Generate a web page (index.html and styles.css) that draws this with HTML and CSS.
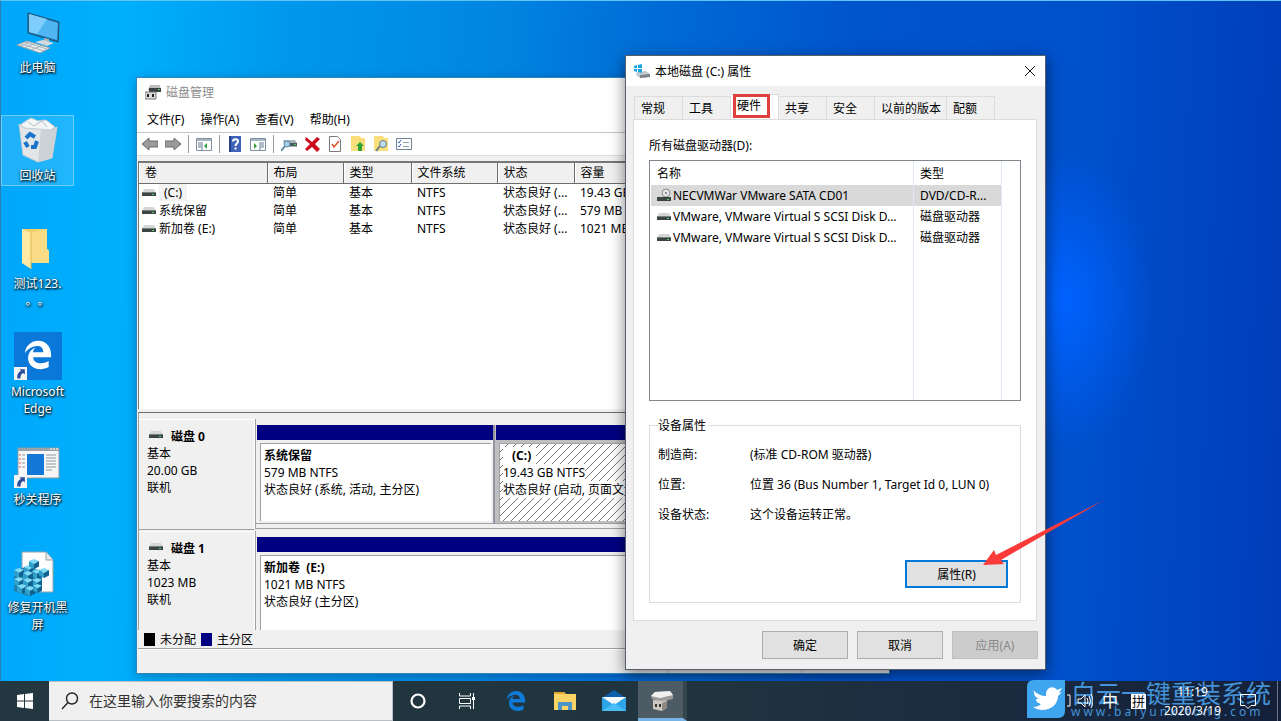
FILE: index.html
```html
<!DOCTYPE html>
<html lang="zh-CN">
<head>
    <meta charset="UTF-8">
    <meta name="viewport" content="width=device-width, initial-scale=1.0">
    <title>磁盘管理</title>
    <link rel="stylesheet" href="styles.css">
</head>
<body>
    <!-- Shared symbols -->
    <svg class="symbols" aria-hidden="true">
        <symbol id="drive" viewBox="0 0 14 14">
            <path d="M2 4h10l2 4H0z" fill="#d3d7d5"/>
            <path d="M0 7h14v4H0z" fill="#3c4444"/>
            <path d="M0 7h14v1H0z" fill="#78807e"/>
            <path d="M10 9h2v1h-2z" fill="#4fd06a"/>
        </symbol>
        <symbol id="shortcut" viewBox="0 0 12 12">
            <path d="M0 0h12v12H0z" fill="#f4f4f4"/>
            <path d="M5 2h5v5L8.500 5.500C6.500 6.500 6 8 6 10.500H3C2.500 7 4 5 6.500 3.500z" fill="#2c4f9c"/>
        </symbol>
        <symbol id="edge" viewBox="0 0 24 24">
            <path d="M2.740 10.810C3.830-1.360 22.500-1.360 21.200 13.560H8.610C8.610 17.850 14.420 19.210 19.540 16.310V20.530C13.250 23.880 5 21.430 5 14.090C5 8.580 9.970 6.810 9.970 6.810C9.970 6.810 8.580 8.580 8.540 10.050H15.700C15.700 2.930 5.900 5.570 2.740 10.810Z" fill="currentColor"/>
        </symbol>
        <symbol id="cube" viewBox="0 0 10 10">
            <path d="M5 0l5 2-5 3-5-3z" fill="#7fdcf4"/>
            <path d="M0 2l5 3v5L0 7.500z" fill="#2f9fcb"/>
            <path d="M10 2L5 5v5l5-2.500z" fill="#12628f"/>
        </symbol>
        <symbol id="diskmgmt" viewBox="0 0 24 24">
            <path d="M2 8l4-4 15-1 3 4v4l-13 3-8-3z" fill="#9b9b9b"/>
            <path d="M2 8l4-4 15-1 3 4-13 3z" fill="#f0f0f0"/>
            <path d="M4 12l9 1 5-1v8l-5 3-9-2z" fill="#cfc8c0"/>
            <path d="M13 15l5-2v7l-5 3z" fill="#8d8781"/>
            <path d="M6 16h2v3H6zM10 16h2v3h-2z" fill="#333"/>
        </symbol>
    </svg>

    <main class="desktop">
        <ul class="shortcuts">
            <li class="shortcut">
                <svg viewBox="0 0 48 48">
                    <path d="M14 5l31 9-1 20-30-9z" fill="#1d76b8" stroke="#234b66"/>
                    <path d="M15 6l29 9-1 17-28-8z" fill="#4fb5f3"/>
                    <path d="M15 6l18 5-10 15-8-2z" fill="#7fcdfa"/>
                    <path d="M30 30l5 1v4h-5z" fill="#a9b6bf"/>
                    <path d="M21 34l8-2 11 3-7 3z" fill="#d3dade"/>
                    <path d="M3 37l10-4 23 7-10 5z" fill="#e9edef" stroke="#9aa5ac"/>
                    <path d="M8 36l22 7M11 34l22 7M10 40l10-4M17 42l10-4M6 38l9-3" stroke="#a9b3b9" fill="none"/>
                </svg>
                <span class="shortcut-name">此电脑</span>
            </li>
            <li class="shortcut selected">
                <svg viewBox="0 0 48 48">
                    <path d="M6 9l6-4 5-3 7 3 8-1 9 7-7 5-20-2z" fill="#f4f6f7" stroke="#c6cdd1"/>
                    <path d="M14 6l6 4 8-5 5 6" stroke="#b4bdc4" fill="none"/>
                    <path d="M5 8l5 4 28 2 5-3-5 31-14 4-15-7z" fill="#e3e6e9" stroke="#c4cbd0"/>
                    <path d="M27 13l11 1 5-3-5 31-14 4z" fill="#ccd2d6"/>
                    <g fill="none" stroke="#1c74c8" stroke-width="4">
                        <path d="M12 22l4-4 5 3"/>
                        <path d="M23 25l-2 6h-4"/>
                        <path d="M14 31l-3-5"/>
                    </g>
                </svg>
                <span class="shortcut-name">回收站</span>
            </li>
            <li class="shortcut">
                <svg viewBox="0 0 48 48">
                    <path d="M8 5h25v20l2 2v12H16z" fill="#f3cf6b"/>
                    <path d="M17 9l16-4v20l2 2v12H17z" fill="#fbdc86"/>
                    <path d="M8 5l9 4v36l-9-6z" fill="#ffeaa5"/>
                    <path d="M17 9v36" stroke="#e2b750"/>
                </svg>
                <span class="shortcut-name">测试123.<br>。。</span>
            </li>
            <li class="shortcut">
                <svg viewBox="0 0 48 48" color="#fff">
                    <path d="M0 0h48v48H0z" fill="#0a78d8"/>
                    <use href="#edge" x="7" y="6" width="34" height="34"/>
                    <use href="#shortcut" x="0" y="35" width="13" height="13"/>
                </svg>
                <span class="shortcut-name">Microsoft Edge</span>
            </li>
            <li class="shortcut">
                <svg viewBox="0 0 48 48">
                    <path d="M4 8h41v30H4z" fill="#f6f6f6" stroke="#8b9aa5"/>
                    <path d="M4 8h41v3H4z" fill="#9ca3a8"/>
                    <path d="M36 9h2M39 9h2M42 9h2" stroke="#fff"/>
                    <path d="M13 14h17v21H13z" fill="#1277d7"/>
                    <path d="M5 15h2M5 19h2M5 23h2M5 27h2" stroke="#e05c4c"/>
                    <path d="M8 15h3M8 19h3M8 23h3M8 27h3M32 15h10M32 18h10M32 21h10M32 24h10M32 27h10M32 30h6" stroke="#8f9699"/>
                    <use href="#shortcut" x="0" y="35" width="13" height="13"/>
                </svg>
                <span class="shortcut-name">秒关程序</span>
            </li>
            <li class="shortcut">
                <svg viewBox="0 0 48 48">
                    <path d="M8 4h24l7 8v32H8z" fill="#fdfdfd" stroke="#9aa2a6"/>
                    <path d="M32 4v8h7" fill="#e4e8ea" stroke="#9aa2a6"/>
                    <path d="M0 23l14-5 14 5v20l-14 5-14-5z" fill="#1f7fae"/>
                    <use href="#cube" x="10" y="17" width="10" height="10"/>
                    <use href="#cube" x="0" y="20" width="10" height="10"/>
                    <use href="#cube" x="18" y="21" width="10" height="10"/>
                    <use href="#cube" x="9" y="23" width="10" height="10"/>
                    <use href="#cube" x="0" y="29" width="10" height="10"/>
                    <use href="#cube" x="18" y="30" width="10" height="10"/>
                    <use href="#cube" x="9" y="30" width="10" height="10"/>
                    <use href="#cube" x="3" y="36" width="10" height="10"/>
                    <use href="#cube" x="11" y="38" width="10" height="10"/>
                    <use href="#cube" x="19" y="36" width="9" height="9"/>
                    <use href="#cube" x="15" y="11" width="10" height="10"/>
                    <use href="#cube" x="25" y="20" width="10" height="10"/>
                </svg>
                <span class="shortcut-name">修复开机黑屏</span>
            </li>
        </ul>

        <!-- Disk management window -->
        <section class="window manager">
            <header class="manager-title">
                <svg viewBox="0 0 16 16">
                    <path d="M5 1h10l1 5H3z" fill="#b9bdbb"/>
                    <path d="M4 4h12v4H4z" fill="#39403f"/>
                    <path d="M13 5h2v1h-2z" fill="#4fd06a"/>
                    <path d="M0 8h11v7H0z" fill="#dadada" stroke="#777"/>
                    <path d="M2 10h2v3H2zM7 10h2v3H7z" fill="#222"/>
                </svg>
                <h1>磁盘管理</h1>
            </header>
            <nav class="menu">
                <button type="button">文件(F)</button>
                <button type="button">操作(A)</button>
                <button type="button">查看(V)</button>
                <button type="button">帮助(H)</button>
            </nav>
            <div class="toolbar">
                <button type="button" aria-label="后退"><svg viewBox="0 0 16 16"><path d="M0 8l7-6v3h9v6H7v3z" fill="#9b9b9b" stroke="#6b6b6b"/></svg></button>
                <button type="button" aria-label="前进"><svg viewBox="0 0 16 16"><path d="M16 8L9 2v3H0v6h9v3z" fill="#9b9b9b" stroke="#6b6b6b"/></svg></button>
                <span class="separator"></span>
                <button type="button" aria-label="控制台树"><svg viewBox="0 0 16 16"><path d="M.5 2.500h15v12H.5z" fill="#fff" stroke="#7f8fa0"/><path d="M1 3h14v2H1z" fill="#a8b6c4"/><path d="M6 6v8M2 7h3M2 9h3M2 11h3" stroke="#5f7894"/><path d="M11 7v6L8 10z" fill="#35a13a"/></svg></button>
                <span class="separator"></span>
                <button type="button" aria-label="帮助"><svg viewBox="0 0 16 16"><path d="M2 0h12v16H2z" fill="#3e62b8"/><path d="M2 0h2v16H2z" fill="#24408c"/><path d="M6 5.500c0-3 5-3 5 0 0 2-2.500 2-2.500 4.500" fill="none" stroke="#fff" stroke-width="2"/><path d="M7.500 11.500h2v2h-2z" fill="#fff"/></svg></button>
                <button type="button" aria-label="操作窗格"><svg viewBox="0 0 16 16"><path d="M.5 2.500h15v12H.5z" fill="#fff" stroke="#7f8fa0"/><path d="M1 3h14v2H1z" fill="#a8b6c4"/><path d="M10 6v8M11 7h3M11 9h3M11 11h3" stroke="#5f7894"/><path d="M4 7v6l3-3z" fill="#35a13a"/></svg></button>
                <span class="separator"></span>
                <button type="button" aria-label="重新扫描"><svg viewBox="0 0 16 16"><path d="M2 4h12l2 3v4H4z" fill="#a8b3b8"/><path d="M5 7h11v3H5z" fill="#4d5a60"/><path d="M13 8h2v1h-2z" fill="#4fd06a"/><circle cx="6" cy="8" r="3" fill="#a9d0ea" stroke="#5c86a4"/><path d="M4 10l-4 5" stroke="#5c86a4" stroke-width="2"/></svg></button>
                <button type="button" aria-label="删除"><svg viewBox="0 0 16 16"><path d="M2 1l6 5 5-5 3 2-5 5 5 5-3 3-5-5-5 4-2-2 5-5-5-4z" fill="#cc0c1c"/></svg></button>
                <button type="button" aria-label="属性"><svg viewBox="0 0 16 16"><path d="M2.500.5h8l3 3v12h-11z" fill="#fff" stroke="#7a7a7a"/><path d="M5 8l2 3 5-6" fill="none" stroke="#e0542c" stroke-width="1.500"/></svg></button>
                <button type="button" aria-label="上移"><svg viewBox="0 0 16 16"><path d="M1 0h9l1 2h4v13H1z" fill="#f9df7c"/><path d="M10 6l4 4h-2v5H8v-5H6z" fill="#2fa336"/></svg></button>
                <button type="button" aria-label="搜索"><svg viewBox="0 0 16 16"><path d="M1 0h9l1 2h4v13H1z" fill="#f9df7c"/><path d="M7 10l-4 5" stroke="#667c88" stroke-width="2"/><circle cx="10" cy="8" r="3.500" fill="#bcdcf0" stroke="#667c88"/></svg></button>
                <button type="button" aria-label="列表"><svg viewBox="0 0 16 16"><path d="M.5 2.500h15v11H.5z" fill="#fff" stroke="#6d8296"/><path d="M2 6l1 1 2-3M2 10l1 1 2-3" fill="none" stroke="#2c62b8"/><path d="M7 6.500h6M7 10.500h6" stroke="#8fa0b0"/></svg></button>
            </div>

            <div class="volumes">
                <table class="volume-table">
                    <colgroup>
                        <col class="col-volume"><col class="col-layout"><col class="col-kind"><col class="col-fs"><col class="col-status"><col>
                    </colgroup>
                    <thead>
                        <tr><th>卷</th><th>布局</th><th>类型</th><th>文件系统</th><th>状态</th><th>容量</th></tr>
                    </thead>
                    <tbody>
                        <tr><td><svg><use href="#drive"/></svg><span class="marked">(C:)</span></td><td>简单</td><td>基本</td><td>NTFS</td><td>状态良好 (...</td><td>19.43 GB</td></tr>
                        <tr><td><svg><use href="#drive"/></svg>系统保留</td><td>简单</td><td>基本</td><td>NTFS</td><td>状态良好 (...</td><td>579 MB</td></tr>
                        <tr><td><svg><use href="#drive"/></svg>新加卷 (E:)</td><td>简单</td><td>基本</td><td>NTFS</td><td>状态良好 (...</td><td>1021 MB</td></tr>
                    </tbody>
                </table>
            </div>

            <div class="disks">
                <article class="disk">
                    <div class="disk-info">
                        <h2><svg><use href="#drive"/></svg>磁盘 0</h2>
                        <p>基本</p>
                        <p>20.00 GB</p>
                        <p>联机</p>
                    </div>
                    <div class="partitions">
                        <div class="partition reserved">
                            <div class="bar"></div>
                            <div class="partition-box">
                                <h3>系统保留</h3>
                                <p>579 MB NTFS</p>
                                <p>状态良好 (系统, 活动, 主分区)</p>
                            </div>
                        </div>
                        <div class="partition active">
                            <div class="bar"></div>
                            <div class="partition-box">
                                <h3 class="indent">(C:)</h3>
                                <p>19.43 GB NTFS</p>
                                <p>状态良好 (启动, 页面文</p>
                            </div>
                        </div>
                    </div>
                </article>
                <article class="disk">
                    <div class="disk-info">
                        <h2><svg><use href="#drive"/></svg>磁盘 1</h2>
                        <p>基本</p>
                        <p>1023 MB</p>
                        <p>联机</p>
                    </div>
                    <div class="partitions">
                        <div class="partition">
                            <div class="bar"></div>
                            <div class="partition-box">
                                <h3>新加卷 &nbsp;(E:)</h3>
                                <p>1021 MB NTFS</p>
                                <p>状态良好 (主分区)</p>
                            </div>
                        </div>
                    </div>
                </article>
            </div>
            <div class="key">
                <span class="swatch free"></span>未分配
                <span class="swatch primary"></span>主分区
            </div>
            <footer class="status"><span></span><span></span></footer>
        </section>

        <!-- Drive properties dialog -->
        <section class="window dialog">
            <header class="dialog-title">
                <svg class="dialog-icon" viewBox="0 0 16 16">
                    <path d="M3 9l9-1 4 3v3l-10 1-4-3z" fill="#c5cacd"/>
                    <path d="M6 12l10-1v3L6 15z" fill="#7d8487"/>
                    <path d="M0 3l3-1v3H0zM4 2l4-1v4H4zM0 6h3v3L0 8zM4 6h4v4L4 9z" fill="#16a3e8"/>
                </svg>
                <h2>本地磁盘 (C:) 属性</h2>
                <button type="button" class="close" aria-label="关闭">
                    <svg viewBox="0 0 12 12"><path d="M1 1l10 10M11 1L1 11" stroke="#111"/></svg>
                </button>
            </header>
            <div class="tabs" role="tablist">
                <button type="button" role="tab">常规</button>
                <button type="button" role="tab">工具</button>
                <button type="button" role="tab" aria-selected="true" class="current">硬件<span class="highlight"></span></button>
                <button type="button" role="tab">共享</button>
                <button type="button" role="tab">安全</button>
                <button type="button" role="tab">以前的版本</button>
                <button type="button" role="tab">配额</button>
            </div>
            <div class="panel">
                <p class="list-label" id="drivesLabel">所有磁盘驱动器(D):</p>
                <div class="drive-list">
                    <table class="drive-table" aria-labelledby="drivesLabel">
                        <colgroup><col><col class="col-type"></colgroup>
                        <thead>
                            <tr><th>名称</th><th>类型</th></tr>
                        </thead>
                        <tbody>
                            <tr class="picked">
                                <td><svg viewBox="0 0 14 14"><circle cx="9" cy="5" r="4" fill="#e3e3e3" stroke="#8c8c8c"/><circle cx="9" cy="5" r="1" fill="#777"/><path d="M0 9h14v4H0z" fill="#3c4444"/><path d="M10 11h2v1h-2z" fill="#4fd06a"/></svg>NECVMWar VMware SATA CD01</td>
                                <td>DVD/CD-R...</td>
                            </tr>
                            <tr>
                                <td><svg><use href="#drive"/></svg>VMware, VMware Virtual S SCSI Disk D...</td>
                                <td>磁盘驱动器</td>
                            </tr>
                            <tr>
                                <td><svg><use href="#drive"/></svg>VMware, VMware Virtual S SCSI Disk D...</td>
                                <td>磁盘驱动器</td>
                            </tr>
                            <tr class="filler"><td></td><td></td></tr>
                        </tbody>
                    </table>
                </div>
                <fieldset class="device">
                    <legend>设备属性</legend>
                    <dl>
                        <dt>制造商:</dt><dd>(标准 CD-ROM 驱动器)</dd>
                        <dt>位置:</dt><dd>位置 36 (Bus Number 1, Target Id 0, LUN 0)</dd>
                        <dt>设备状态:</dt><dd>这个设备运转正常。</dd>
                    </dl>
                    <button type="button" class="btn focused">属性(R)</button>
                </fieldset>
            </div>
            <footer class="actions">
                <button type="button" class="btn">确定</button>
                <button type="button" class="btn">取消</button>
                <button type="button" class="btn" disabled>应用(A)</button>
            </footer>
            <svg class="pointer" viewBox="0 0 122 66" aria-hidden="true">
                <path d="M0 65l11-15 2 5L121 0 18 60l3 4z" fill="#fb3a3a"/>
            </svg>
        </section>
    </main>

    <footer class="taskbar">
        <button type="button" class="start" aria-label="开始">
            <svg viewBox="0 0 16 16"><path d="M0 2l7-1v6.500H0zM8 1l8-1v7.500H8zM0 8.500h7V15l-7-1zM8 8.500h8V16l-8-1z" fill="#fff"/></svg>
        </button>
        <label class="search">
            <svg viewBox="0 0 18 18"><circle cx="11" cy="6.500" r="5.500" fill="none" stroke="#222" stroke-width="1.400"/><path d="M7 10.500L1 17" stroke="#222" stroke-width="1.400"/></svg>
            <input type="search" placeholder="在这里输入你要搜索的内容" aria-label="搜索">
        </label>
        <nav class="apps">
            <button type="button" aria-label="Cortana"><svg viewBox="0 0 24 24"><circle cx="12" cy="12" r="6.500" fill="none" stroke="#fff" stroke-width="2.200"/></svg></button>
            <button type="button" aria-label="任务视图"><svg viewBox="0 0 24 24"><path d="M4.500 4v3h11V4M4.500 20v-3h11v3M4.500 9.500h11v5h-11zM18.500 4v16" fill="none" stroke="#fff"/><path d="M17 8h3v3h-3z" fill="#fff"/></svg></button>
            <button type="button" class="blue" aria-label="Edge"><svg><use href="#edge"/></svg></button>
            <button type="button" aria-label="文件资源管理器"><svg viewBox="0 0 24 24"><path d="M1 3h10l2 2h10v16H1z" fill="#fbd465"/><path d="M1 3h10l1 2H1z" fill="#e0a72e"/><path d="M5 21v-8h14v8h-4v-4H9v4z" fill="#4d93c8"/></svg></button>
            <button type="button" aria-label="邮件"><svg viewBox="0 0 24 24"><path d="M0 9l12-8 12 8v3H0z" fill="#0d5fae"/><path d="M0 8h24v14H0z" fill="#2ba5e8"/><path d="M0 8h24L12 16z" fill="#f4f8fb"/><path d="M0 22L12 14l12 8z" fill="#49bdf5"/></svg></button>
            <button type="button" class="running" aria-label="磁盘管理"><svg><use href="#diskmgmt"/></svg></button>
        </nav>
        <div class="tray">
            <svg viewBox="0 0 26 18"><path d="M0 3h3v11H0" fill="none" stroke="#fff"/><path d="M11 7h3l4-4v12l-4-4h-3zM20 6q2 3 0 6M22 4q3 5 0 10M24 2q4 7 0 14" fill="none" stroke="#fff"/></svg>
            <span class="ime">中</span>
            <span class="ime mode">拼</span>
            <time class="clock">11:19<br>2020/3/19</time>
            <svg class="notices" viewBox="0 0 18 18"><path d="M1.500 2.500h15v11H12l-3 3-3-3H1.500z" fill="none" stroke="#fff"/></svg>
        </div>
        <div class="watermark">
            <svg viewBox="0 0 38 38">
                <path d="M7 0h31v31q0 7-7 7H0V7q0-7 7-7z" fill="#3fa5ee"/>
                <path d="M6 10c4 4 8 6 13 6-1-9 8-11 11-6l5-2-3 5 3-1-4 4c0 12-15 18-25 11 4 0 6-1 8-3-4-1-5-3-5-5h3c-4-2-5-4-5-7z" fill="#fff"/>
            </svg>
            <div>
                <strong>白云一键重装系统</strong>
                <span>www.baiyunxitong.com</span>
            </div>
        </div>
    </footer>
</body>
</html>
```

FILE: styles.css
```css
:root {
    --face: #f0f0f0;
    --line: #a0a0a0;
    --soft-line: #dcdcdc;
    --navy: #000080;
    --accent: #0078d7;
}

* {
    box-sizing: border-box;
}

body {
    margin: 0;
    height: 100vh;
    display: flex;
    flex-direction: column;
    overflow: hidden;
    font-family: "Noto Sans", "Noto Sans CJK SC", sans-serif;
    font-size: 12px;
    line-height: 17px;
    color: #000;
}

h1, h2, h3, p, ul, dl, dd {
    margin: 0;
    padding: 0;
    font-size: 12px;
    font-weight: normal;
}

button, input {
    font: inherit;
    color: inherit;
    margin: 0;
    padding: 0;
    border: 0;
    background: none;
}

svg {
    display: block;
    flex: none;
}

.symbols {
    position: absolute;
    width: 0;
    height: 0;
}

/* Desktop */
.desktop {
    position: relative;
    flex: 1;
    min-height: 0;
    border-left: 1px solid #2c7fb4;
    border-top: 1px solid #5fc4f4;
    background:
        radial-gradient(ellipse 90px 150px at 1062px 300px, #0062ff 0%, rgba(0, 98, 255, 0) 100%),
        linear-gradient(92deg, #00a6fa 0%, #00b0fe 9%, #0098ec 22%, #0086e2 38%, #006cd6 50%, #0054cc 66%, #0050cc 84%, #003cb8 100%);
}

.shortcuts {
    width: 73px;
    padding-top: 6px;
    display: flex;
    flex-direction: column;
    gap: 37px;
    list-style: none;
}

.shortcut {
    height: 71px;
    border: 1px solid transparent;
    display: flex;
    flex-direction: column;
    align-items: center;
    gap: 3px;
}

.shortcut.selected {
    border-color: rgba(255, 255, 255, 0.35);
    background: rgba(255, 255, 255, 0.12);
}

.shortcut svg {
    width: 48px;
    height: 48px;
}

.shortcut-name {
    width: 64px;
    text-align: center;
    text-spacing-trim: space-all;
    color: #fff;
    text-shadow: 1px 1px 2px #000, 0 1px 3px rgba(0, 0, 0, 0.8);
}

/* Windows */
.window {
    position: absolute;
    display: flex;
    flex-direction: column;
    background: var(--face);
}

.manager {
    left: 136px;
    top: 77px;
    bottom: 8px;
    width: 752px;
    box-shadow: 0 0 0 1px #2c86bc, 0 2px 10px rgba(0, 0, 0, 0.3);
}

.manager-title {
    height: 28px;
    padding-left: 8px;
    display: flex;
    align-items: center;
    gap: 5px;
    background: #fff;
    color: #8c8c8c;
}

.manager-title svg {
    width: 16px;
    height: 16px;
}

.menu {
    height: 27px;
    padding-left: 10px;
    display: flex;
    gap: 16px;
    background: #fff;
    border-bottom: 1px solid #c4c4c8;
}

.toolbar {
    height: 23px;
    padding-left: 5px;
    display: flex;
    align-items: center;
    gap: 7px;
    background: #fff;
    border-bottom: 1px solid var(--soft-line);
}

.toolbar svg {
    width: 16px;
    height: 16px;
}

.separator {
    width: 1px;
    height: 18px;
    background: #9a9a9a;
}

.volumes {
    height: 248px;
    margin: 5px 2px 0 1px;
    background: #fff;
    border-top: 2px solid #777;
    border-left: 1px solid #777;
}

.volume-table {
    width: 100%;
    border-collapse: collapse;
    table-layout: fixed;
    white-space: nowrap;
}

.volume-table th,
.volume-table td {
    height: 18px;
    padding: 0 0 0 6px;
    text-align: left;
    font-weight: normal;
    line-height: 17px;
    overflow: hidden;
}

.volume-table th {
    height: 20px;
    background: var(--face);
    border-right: 1px solid #6d6d6d;
    border-bottom: 1px solid #6d6d6d;
    box-shadow: inset 1px 0 #fff;
}

.volume-table td:first-child {
    padding-left: 3px;
}

.volume-table svg,
.drive-table svg,
.disk-info svg {
    width: 14px;
    height: 14px;
    display: inline-block;
    vertical-align: -2px;
    margin-right: 3px;
}

.drive-table svg {
    margin-right: 2px;
}

.marked {
    padding: 0 5px;
    background: #f3f3f3;
}

.col-volume { width: 128px; }
.col-layout { width: 76px; }
.col-kind { width: 68px; }
.col-fs { width: 86px; }
.col-status { width: 77px; }

/* Graphical disk view */
.disks {
    flex: 1;
    min-height: 0;
    overflow: hidden;
    margin: 3px 2px 0 1px;
    padding-top: 6px;
    border-top: 1px solid #6d6d6d;
    border-left: 1px solid var(--line);
}

.disk {
    height: 112px;
    display: flex;
}

.disk-info {
    width: 116px;
    height: 111px;
    padding: 7px 0 0 8px;
    border-top: 1px solid #fff;
    border-right: 1px solid #fff;
    border-bottom: 1px solid var(--line);
}

.disk-info h2,
.partition h3 {
    font-weight: bold;
}

.disk-info h2 svg {
    margin: 0 8px 0 2px;
    vertical-align: 0;
}

.partitions {
    flex: 1;
    height: 110px;
    padding-top: 6px;
    display: flex;
    border-left: 1px solid var(--line);
    border-bottom: 1px solid var(--line);
}

.partition {
    flex: 1;
    height: 99px;
    padding-left: 1px;
    display: flex;
    flex-direction: column;
    border-bottom: 1px solid var(--line);
}

.partition.reserved {
    flex: none;
    width: 239px;
    border-right: 2px solid #9494a4;
}

.bar {
    height: 15px;
    background: var(--navy);
}

.partition-box {
    flex: 1;
    margin: 3px 2px 2px 3px;
    padding: 3px 0 0 3px;
    background: #fff;
    border-top: 1px solid var(--line);
    border-left: 1px solid var(--line);
}

.partition.active {
    background: #bdbdc2;
}

.active .partition-box {
    background: linear-gradient(135deg, #fff 46%, #777 46%, #777 54%, #fff 54%) 0 0 / 8px 8px;
}

.active h3,
.active p {
    width: fit-content;
    background: #fff;
}

.active .indent {
    padding-left: 9px;
    padding-right: 5px;
}

.key {
    height: 19px;
    margin: 0 2px 0 1px;
    padding-left: 6px;
    display: flex;
    align-items: center;
    gap: 5px;
    border-bottom: 1px solid var(--line);
}

.swatch {
    width: 11px;
    height: 13px;
}

.free { background: #000; }
.primary { background: var(--navy); }

.status {
    height: 24px;
    border-top: 1px solid #fff;
    display: flex;
    justify-content: flex-end;
    padding-right: 87px;
}

.status span {
    width: 133px;
    border-right: 1px solid #c8c8c8;
}

/* Properties dialog */
.dialog {
    left: 624px;
    top: 54px;
    bottom: 11px;
    width: 421px;
    border: 1px solid #55606c;
    box-shadow: 0 4px 14px rgba(0, 0, 0, 0.5);
}

.dialog-title {
    height: 30px;
    padding: 0 9px 0 8px;
    display: flex;
    align-items: center;
    gap: 5px;
    background: #fff;
}

.dialog-icon {
    width: 16px;
    height: 16px;
}

.close {
    margin-left: auto;
}

.close svg {
    width: 12px;
    height: 12px;
}

.tabs {
    margin-top: 9px;
    padding-left: 8px;
    height: 24px;
    display: flex;
    align-items: flex-end;
}

.tabs button {
    position: relative;
    height: 23px;
    min-width: 48px;
    padding: 0 5px 0 6px;
    text-align: left;
    border: 1px solid var(--soft-line);
    border-left: 0;
    border-bottom: 0;
}

.tabs button:first-child {
    min-width: 49px;
    border-left: 1px solid var(--soft-line);
}

.tabs .current {
    height: 25px;
    padding-bottom: 3px;
    background: #fff;
}

.highlight {
    position: absolute;
    left: 2px;
    top: -1px;
    width: 37px;
    height: 24px;
    border: 3px solid #df3f3f;
}

.panel {
    flex: 1;
    min-height: 0;
    margin: 0 8px 0 7px;
    padding: 17px 15px;
    background: #fff;
    border: 1px solid var(--soft-line);
    display: flex;
    flex-direction: column;
}

.drive-list {
    height: 243px;
    margin-top: 6px;
    padding: 0 18px 0 1px;
    border: 1px solid #828790;
}

.drive-table {
    width: 100%;
    height: 100%;
    border-collapse: collapse;
    table-layout: fixed;
    white-space: nowrap;
}

.drive-table th,
.drive-table td {
    height: 21px;
    padding: 0 0 0 6px;
    text-align: left;
    font-weight: normal;
    border-right: 1px solid #dfeaf5;
}

.drive-table th {
    height: 24px;
}

.drive-table .filler td {
    height: auto;
}

.col-type { width: 88px; }

.picked {
    background: #d9d9d9;
}

.device {
    min-width: 0;
    height: 187px;
    margin: 16px 0 0;
    padding: 12px 12px 14px 8px;
    border: 1px solid var(--soft-line);
    display: flex;
    flex-direction: column;
}

.device legend {
    padding: 0 2px 0 0;
}

.device dl {
    display: grid;
    grid-template-columns: 92px 1fr;
    row-gap: 13px;
}

.btn {
    width: 86px;
    height: 28px;
    border: 1px solid #adadad;
    background: #e1e1e1;
}

.btn:disabled {
    color: #888;
    background: #ccc;
    border-color: #bfbfbf;
}

.btn.focused {
    width: 103px;
    margin: auto 0 0 auto;
    border: 2px solid var(--accent);
}

.actions {
    padding: 10px 7px 10px;
    display: flex;
    justify-content: flex-end;
    gap: 9px;
}

.pointer {
    position: absolute;
    left: 357px;
    top: 444px;
    width: 122px;
    height: 66px;
}

/* Taskbar */
.taskbar {
    position: relative;
    height: 40px;
    display: flex;
    color: #fff;
    background: linear-gradient(90deg, #22373f 0%, #20343f 55%, #1b2c40 75%, #14203a 100%);
}

.start {
    width: 49px;
    display: grid;
    place-items: center;
}

.start svg {
    width: 16px;
    height: 16px;
}

.search {
    width: 344px;
    padding-left: 12px;
    display: flex;
    align-items: center;
    gap: 10px;
    background: var(--face);
    border: 1px solid #b9c0c3;
    border-left: 0;
}

.search svg {
    width: 18px;
    height: 18px;
}

.search input {
    flex: 1;
    min-width: 0;
    font-size: 14px;
    line-height: 20px;
    color: #222;
    outline: none;
}

.search input::placeholder {
    color: #333;
    opacity: 1;
}

.apps {
    display: flex;
}

.apps button {
    width: 49px;
    display: grid;
    place-items: center;
}

.apps svg {
    width: 24px;
    height: 24px;
}

.apps .blue {
    color: #0f7ad8;
}

.apps .running {
    background: #4c5b64;
    border-bottom: 3px solid #76b4e6;
    border-right: 4px solid #34474f;
}

.tray {
    position: relative;
    z-index: 1;
    margin-left: auto;
    padding-right: 20px;
    display: flex;
    align-items: center;
    gap: 9px;
    border-right: 1px solid #6b7586;
    margin-right: 3px;
}

.tray svg {
    width: 26px;
    height: 18px;
}

.ime {
    font-size: 16px;
}

.ime.mode {
    width: 15px;
    height: 15px;
    margin-left: 4px;
    font-size: 13px;
    line-height: 15px;
    text-align: center;
    color: #111;
    background: #fff;
}

.clock {
    margin: 0 9px;
    line-height: 19px;
    text-align: center;
}

.tray .notices {
    width: 18px;
}

.watermark {
    position: absolute;
    right: 10px;
    bottom: 3px;
    display: flex;
    gap: 6px;
    color: #4493d8;
}

.watermark svg {
    width: 38px;
    height: 38px;
}

.watermark strong,
.watermark span {
    display: block;
}

.watermark strong {
    font-size: 25px;
    line-height: 26px;
    font-weight: normal;
}

.watermark span {
    line-height: 12px;
    letter-spacing: 3px;
}
```
